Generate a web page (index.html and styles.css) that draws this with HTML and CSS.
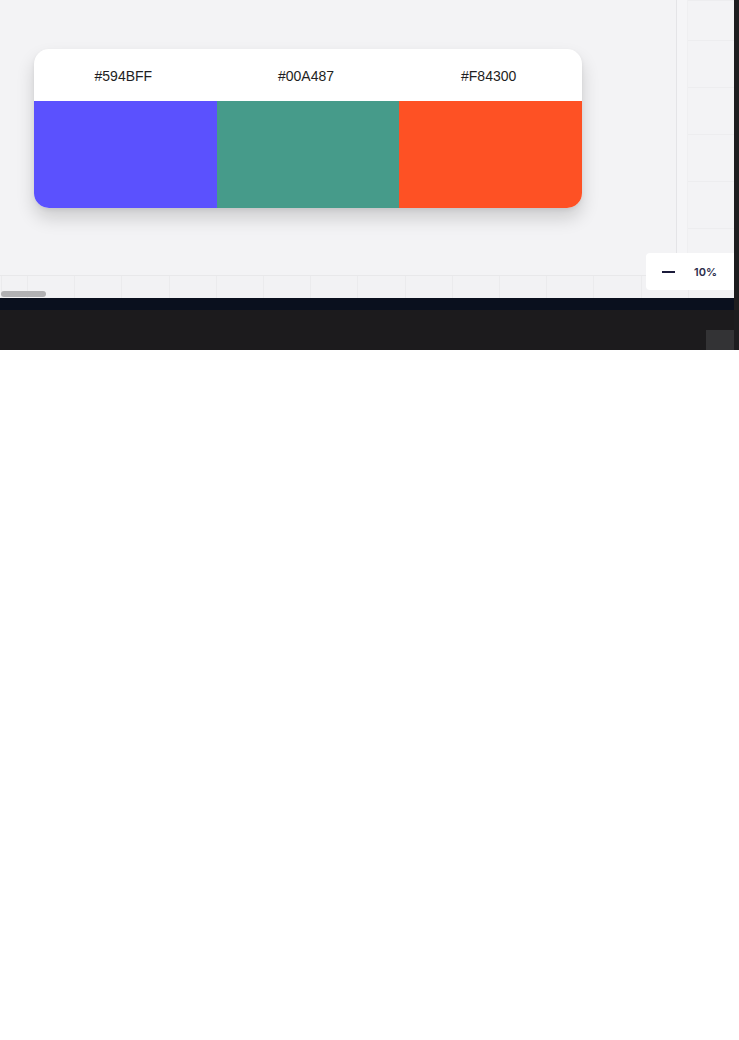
FILE: index.html
```html
<!DOCTYPE html>
<html>
<head>
<meta charset="utf-8">
<link rel="stylesheet" href="styles.css">
</head>
<body>
<div class="app">
  <div class="main">
    <div class="workspace">
      <div class="top">
        <div class="stage">
          <div class="palette">
            <div class="swatch">
              <div class="label">#594BFF</div>
              <div class="color c1"></div>
            </div>
            <div class="swatch">
              <div class="label">#00A487</div>
              <div class="color c2"></div>
            </div>
            <div class="swatch">
              <div class="label">#F84300</div>
              <div class="color c3"></div>
            </div>
          </div>
        </div>
        <div class="side"><div class="side-inner"></div></div>
      </div>
      <div class="ruler">
        <div class="thumb"></div>
      </div>
      <div class="zoom">
        <span class="minus"></span>
        <span class="pct">10%</span>
      </div>
    </div>
    <div class="navy"></div>
    <div class="footer"><div class="square"></div></div>
  </div>
  <div class="edge"></div>
</div>
</body>
</html>
```

FILE: styles.css
```css
html, body {
  margin: 0;
  padding: 0;
  background: #ffffff;
}

.app {
  display: flex;
  width: 739px;
  height: 350px;
}

.main {
  width: 734px;
  display: flex;
  flex-direction: column;
}

.edge {
  width: 5px;
  background: #1d1d1f;
}

.workspace {
  position: relative;
  height: 298px;
  display: flex;
  flex-direction: column;
  background: #f3f3f5;
}

.top {
  display: flex;
  height: 275px;
  border-bottom: 1px solid #e8e8ea;
}

.stage {
  width: 677px;
  padding: 49px 0 0 34px;
  box-sizing: border-box;
  border-right: 1px solid #e4e4e7;
}

.palette {
  width: 548px;
  display: flex;
  border-radius: 15px;
  overflow: hidden;
  background: #ffffff;
  box-shadow: 0 10px 18px rgba(0, 0, 0, 0.16), 0 2px 4px rgba(0, 0, 0, 0.06);
}

.swatch {
  flex: 1;
  display: flex;
  flex-direction: column;
}

.label {
  height: 52px;
  box-sizing: border-box;
  padding: 2px 4px 0 0;
  display: flex;
  align-items: center;
  justify-content: center;
  font-family: "Liberation Sans", Arial, sans-serif;
  font-size: 14px;
  color: #1e1e22;
}

.color {
  height: 107px;
}

.c1 { background: #5b51fe; }
.c2 { background: #469b8a; }
.c3 { background: #fe5124; }

.side {
  flex: 1;
  display: flex;
  background: #f5f5f7;
}

.side-inner {
  flex: 1;
  margin-left: 10px;
  border-left: 1px solid #efeff1;
  background-color: #f3f3f5;
  background-image: repeating-linear-gradient(to bottom, #ededef 0, #ededef 1px, transparent 1px, transparent 47px);
  background-position: 0 40px;
}

.ruler {
  position: relative;
  flex: 1;
  background-color: #f2f2f4;
  background-image: repeating-linear-gradient(to right, #ebebed 0, #ebebed 1px, transparent 1px, transparent 47.2px);
  background-position: 27px 0;
}

.thumb {
  position: absolute;
  left: 1px;
  bottom: 1px;
  width: 45px;
  height: 6px;
  border-radius: 3px;
  background: #b1b1b3;
}

.zoom {
  position: absolute;
  left: 646px;
  top: 253px;
  width: 88px;
  height: 37px;
  box-sizing: border-box;
  background: #ffffff;
  border-radius: 4px 0 0 4px;
  display: flex;
  align-items: center;
  padding-left: 16px;
}

.minus {
  width: 13px;
  height: 2px;
  background: #1b1b3a;
}

.pct {
  margin-left: 19px;
  font-family: Inter, "Liberation Sans", sans-serif;
  font-size: 11px;
  font-weight: 600;
  color: #2b2b4b;
}

.navy {
  height: 12px;
  background: #0a101e;
}

.footer {
  flex: 1;
  background: #1c1b1d;
  display: flex;
  justify-content: flex-end;
  align-items: flex-end;
}

.square {
  width: 28px;
  height: 20px;
  background: #333335;
}
```
